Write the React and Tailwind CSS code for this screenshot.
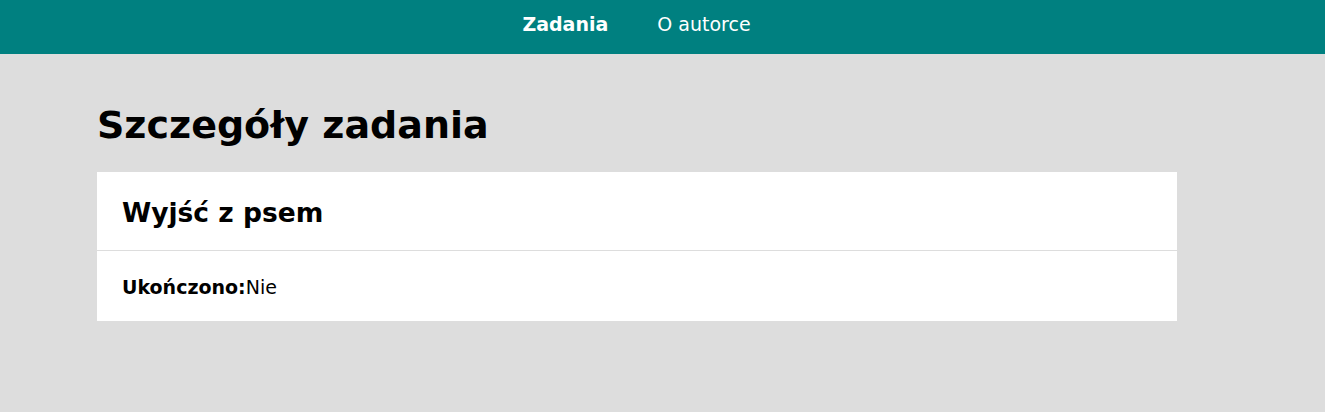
export default function App() {
  return (
    <div className="min-h-screen bg-[#dddddd] font-['DejaVu_Sans',sans-serif] text-black">
      <nav className="h-[54px] bg-[#008080] flex items-center justify-center pr-[52px] pb-[5px] gap-[49px] text-white text-[19px]">
        <a className="font-bold">Zadania</a>
        <a>O autorce</a>
      </nav>
      <main className="pl-[97px] pr-[148px]">
        <h1 className="font-bold text-[38px] leading-none pt-[52px] pb-[28px]">Szczegóły zadania</h1>
        <div className="bg-white">
          <div className="px-[25px] pt-[3px] h-[79px] flex items-center border-b border-[#dddddd]">
            <h2 className="font-bold text-[26.5px]">Wyjść z psem</h2>
          </div>
          <div className="px-[25px] pt-[2px] h-[70px] flex items-center text-[19px]">
            <span className="font-bold">Ukończono:</span>
            <span>Nie</span>
          </div>
        </div>
      </main>
    </div>
  )
}
